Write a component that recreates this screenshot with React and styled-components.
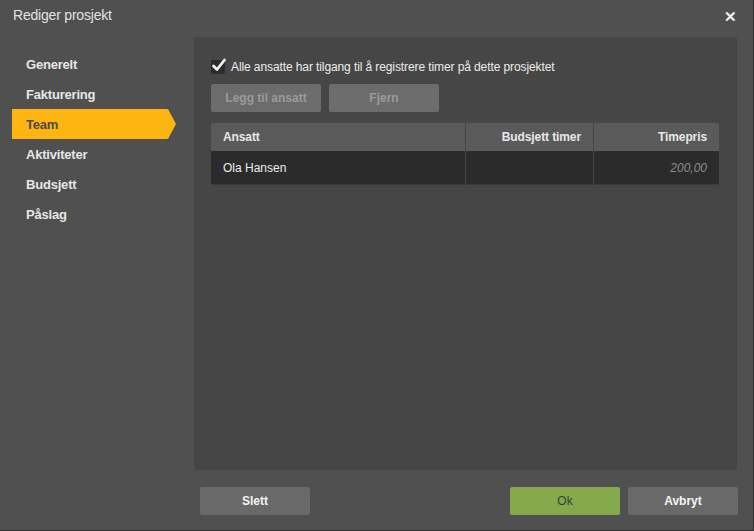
import React from "react";
import styled, { createGlobalStyle } from "styled-components";

const Global = createGlobalStyle`
  html, body { margin: 0; padding: 0; background: #505050; }
  body { font-family: "Liberation Sans", Arial, sans-serif; }
  * { box-sizing: border-box; }
`;

const Dialog = styled.div`
  width: 754px;
  height: 531px;
  background: #505050;
  border-right: 1px solid #2e2e2e;
  border-bottom: 1px solid #2e2e2e;
  display: flex;
  flex-direction: column;
`;

const TitleBar = styled.div`
  height: 37px;
  display: flex;
  align-items: center;
  justify-content: space-between;
  padding: 0 16px 0 13px;
`;

const Title = styled.div`
  color: #e2e2e2;
  font-size: 14px;
  letter-spacing: -0.2px;
  margin-top: -7px;
`;

const Close = styled.div`
  color: #f2f2f2;
  font-size: 15px;
  font-weight: bold;
  margin-top: -4px;
`;

const Body = styled.div`
  display: flex;
  flex: 1;
  padding-right: 16px;
`;

const Side = styled.nav`
  width: 194px;
  padding-top: 12px;
  padding-left: 12px;
  display: flex;
  flex-direction: column;
`;

const NavItem = styled.div`
  position: relative;
  height: 30px;
  width: 156px;
  display: flex;
  align-items: center;
  padding-left: 14px;
  font-size: 13px;
  font-weight: bold;
  letter-spacing: -0.2px;
  color: ${(p) => (p.$active ? "#4d4a45" : "#e6e6e6")};
  background: ${(p) => (p.$active ? "#ffb511" : "transparent")};
  border-radius: 1px;
  &::after {
    content: "";
    display: ${(p) => (p.$active ? "block" : "none")};
    position: absolute;
    right: -8px;
    top: 0;
    border-top: 15px solid transparent;
    border-bottom: 15px solid transparent;
    border-left: 8px solid #ffb511;
  }
`;

const Main = styled.div`
  flex: 1;
  display: flex;
  flex-direction: column;
`;

const Panel = styled.div`
  height: 433px;
  background: #464646;
  border-radius: 2px;
  padding: 22px 17px 0 17px;
  display: flex;
  flex-direction: column;
`;

const CheckRow = styled.label`
  display: flex;
  align-items: center;
  gap: 6px;
  color: #ececec;
  font-size: 12px;
  letter-spacing: -0.1px;
  height: 16px;
`;

const Box = styled.span`
  width: 14px;
  height: 14px;
  background: #2c2c2c;
  border-radius: 2px;
  position: relative;
  display: inline-block;
`;

const Tick = styled.svg`
  position: absolute;
  left: 0px;
  top: -3px;
`;

const ButtonRow = styled.div`
  display: flex;
  gap: 8px;
  margin-top: 9px;
`;

const Button = styled.button`
  width: 110px;
  height: 28px;
  border: none;
  border-radius: 2px;
  font-family: "Liberation Sans", Arial, sans-serif;
  font-size: 12px;
  background: ${(p) => (p.$variant === "ok" ? "#85a94c" : p.$variant === "dim" ? "#6c6c6c" : "#696969")};
  color: ${(p) => (p.$variant === "ok" ? "#3a3f33" : p.$variant === "dim" ? "#9b9b9b" : "#f4f4f4")};
  font-weight: ${(p) => (p.$variant === "ok" ? "normal" : "bold")};
  padding: 0;
`;

const Table = styled.div`
  margin-top: 11px;
  width: 508px;
  display: grid;
  grid-template-columns: 254px 128px 126px;
`;

const Head = styled.div`
  height: 28px;
  background: #5a5a5a;
  color: #e8e8e8;
  font-size: 12px;
  font-weight: bold;
  letter-spacing: -0.1px;
  display: flex;
  align-items: center;
  justify-content: ${(p) => (p.$right ? "flex-end" : "flex-start")};
  padding: 0 12px;
  border-left: ${(p) => (p.$first ? "none" : "1px solid #454545")};
  border-radius: ${(p) => (p.$first ? "2px 0 0 0" : p.$last ? "0 2px 0 0" : "0")};
`;

const Cell = styled.div`
  height: 34px;
  background: #2b2b2b;
  color: ${(p) => (p.$muted ? "#8a8a8a" : "#ececec")};
  font-style: ${(p) => (p.$muted ? "italic" : "normal")};
  font-size: 12px;
  display: flex;
  align-items: center;
  justify-content: ${(p) => (p.$right ? "flex-end" : "flex-start")};
  padding: 0 12px;
  border-left: ${(p) => (p.$first ? "none" : "1px solid #454545")};
  border-bottom: 1px solid #3a3a3a;
`;

const Footer = styled.div`
  display: flex;
  justify-content: space-between;
  padding: 17px 0 0 6px;
  margin-right: -1px;
`;

const Group = styled.div`
  display: flex;
  gap: 8px;
`;

export default function App() {
  const items = ["Generelt", "Fakturering", "Team", "Aktiviteter", "Budsjett", "Påslag"];
  return (
    <>
      <Global />
      <Dialog>
        <TitleBar>
          <Title>Rediger prosjekt</Title>
          <Close>✕</Close>
        </TitleBar>
        <Body>
          <Side>
            {items.map((it) => (
              <NavItem key={it} $active={it === "Team"}>{it}</NavItem>
            ))}
          </Side>
          <Main>
            <Panel>
              <CheckRow>
                <Box>
                  <Tick width="16" height="16" viewBox="0 0 16 16">
                    <path d="M2.5 9 L6 12.5 L13.5 3" fill="none" stroke="#f2f2f2" strokeWidth="2.8" strokeLinecap="round" strokeLinejoin="round" />
                  </Tick>
                </Box>
                Alle ansatte har tilgang til å registrere timer på dette prosjektet
              </CheckRow>
              <ButtonRow>
                <Button $variant="dim">Legg til ansatt</Button>
                <Button $variant="dim">Fjern</Button>
              </ButtonRow>
              <Table>
                <Head $first>Ansatt</Head>
                <Head $right>Budsjett timer</Head>
                <Head $right $last>Timepris</Head>
                <Cell $first>Ola Hansen</Cell>
                <Cell $right></Cell>
                <Cell $right $muted>200,00</Cell>
              </Table>
            </Panel>
            <Footer>
              <Button>Slett</Button>
              <Group>
                <Button $variant="ok">Ok</Button>
                <Button>Avbryt</Button>
              </Group>
            </Footer>
          </Main>
        </Body>
      </Dialog>
    </>
  );
}
